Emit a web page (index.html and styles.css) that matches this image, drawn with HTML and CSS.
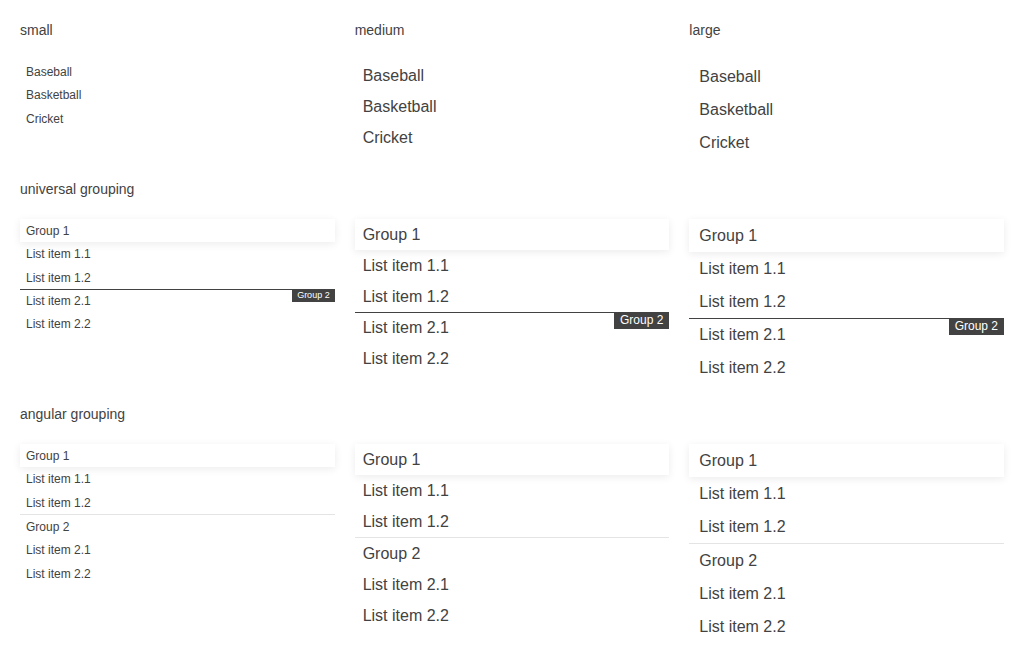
FILE: index.html
```html
<!DOCTYPE html>
<html>
<head>
<meta charset="utf-8">
<link rel="stylesheet" href="styles.css">
</head>
<body>
<div class="grid">
  <h3 class="title">small</h3>
  <h3 class="title">medium</h3>
  <h3 class="title">large</h3>

  <ul class="list sm">
    <li class="item">Baseball</li>
    <li class="item">Basketball</li>
    <li class="item">Cricket</li>
  </ul>
  <ul class="list md">
    <li class="item">Baseball</li>
    <li class="item">Basketball</li>
    <li class="item">Cricket</li>
  </ul>
  <ul class="list lg">
    <li class="item">Baseball</li>
    <li class="item">Basketball</li>
    <li class="item">Cricket</li>
  </ul>

  <h3 class="title span">universal grouping</h3>

  <ul class="list sm">
    <li class="item header">Group 1</li>
    <li class="item">List item 1.1</li>
    <li class="item">List item 1.2</li>
    <li class="item first-in-group">List item 2.1<span class="label">Group 2</span></li>
    <li class="item">List item 2.2</li>
  </ul>
  <ul class="list md">
    <li class="item header">Group 1</li>
    <li class="item">List item 1.1</li>
    <li class="item">List item 1.2</li>
    <li class="item first-in-group">List item 2.1<span class="label">Group 2</span></li>
    <li class="item">List item 2.2</li>
  </ul>
  <ul class="list lg">
    <li class="item header">Group 1</li>
    <li class="item">List item 1.1</li>
    <li class="item">List item 1.2</li>
    <li class="item first-in-group">List item 2.1<span class="label">Group 2</span></li>
    <li class="item">List item 2.2</li>
  </ul>

  <h3 class="title span">angular grouping</h3>

  <ul class="list sm">
    <li class="item header">Group 1</li>
    <li class="item">List item 1.1</li>
    <li class="item">List item 1.2</li>
    <li class="item group-title">Group 2</li>
    <li class="item">List item 2.1</li>
    <li class="item">List item 2.2</li>
  </ul>
  <ul class="list md">
    <li class="item header">Group 1</li>
    <li class="item">List item 1.1</li>
    <li class="item">List item 1.2</li>
    <li class="item group-title">Group 2</li>
    <li class="item">List item 2.1</li>
    <li class="item">List item 2.2</li>
  </ul>
  <ul class="list lg">
    <li class="item header">Group 1</li>
    <li class="item">List item 1.1</li>
    <li class="item">List item 1.2</li>
    <li class="item group-title">Group 2</li>
    <li class="item">List item 2.1</li>
    <li class="item">List item 2.2</li>
  </ul>
</div>
</body>
</html>
```

FILE: styles.css
```css
html, body {
  margin: 0;
  padding: 0;
  background: #ffffff;
}

body {
  font-family: "Liberation Sans", Arial, sans-serif;
  color: #424242;
}

.grid {
  display: grid;
  grid-template-columns: repeat(3, 1fr);
  column-gap: 20px;
  row-gap: 20px;
  padding: 20px;
  align-items: start;
}

.title {
  margin: 0;
  font-size: 14px;
  line-height: 20px;
  font-weight: normal;
  color: #424242;
}

.span {
  grid-column: 1 / -1;
}

.list {
  margin: 0;
  padding: 0;
  list-style: none;
}

.item {
  position: relative;
  white-space: nowrap;
}

.sm .item {
  font-size: 12px;
  line-height: 15.333px;
  padding: 5px 6px 3px;
}

.md .item {
  font-size: 16px;
  line-height: 23px;
  padding: 4px 8px;
}

.lg .item {
  font-size: 16px;
  line-height: 23px;
  padding: 5px 10px;
}

.header {
  background: #ffffff;
  box-shadow: 0 2px 8px rgba(0, 0, 0, 0.08);
  z-index: 1;
}

.first-in-group {
  box-shadow: inset 0 1px 0 #424242;
}

.label {
  position: absolute;
  top: 0;
  right: 0;
  background: #424242;
  color: #ffffff;
}

.sm .label {
  font-size: 9px;
  line-height: 13px;
  padding: 0 5px;
}

.md .label,
.lg .label {
  font-size: 12px;
  line-height: 17px;
  padding: 0 6px;
}

.group-title {
  border-top: 1px solid #e4e4e4;
}
```
